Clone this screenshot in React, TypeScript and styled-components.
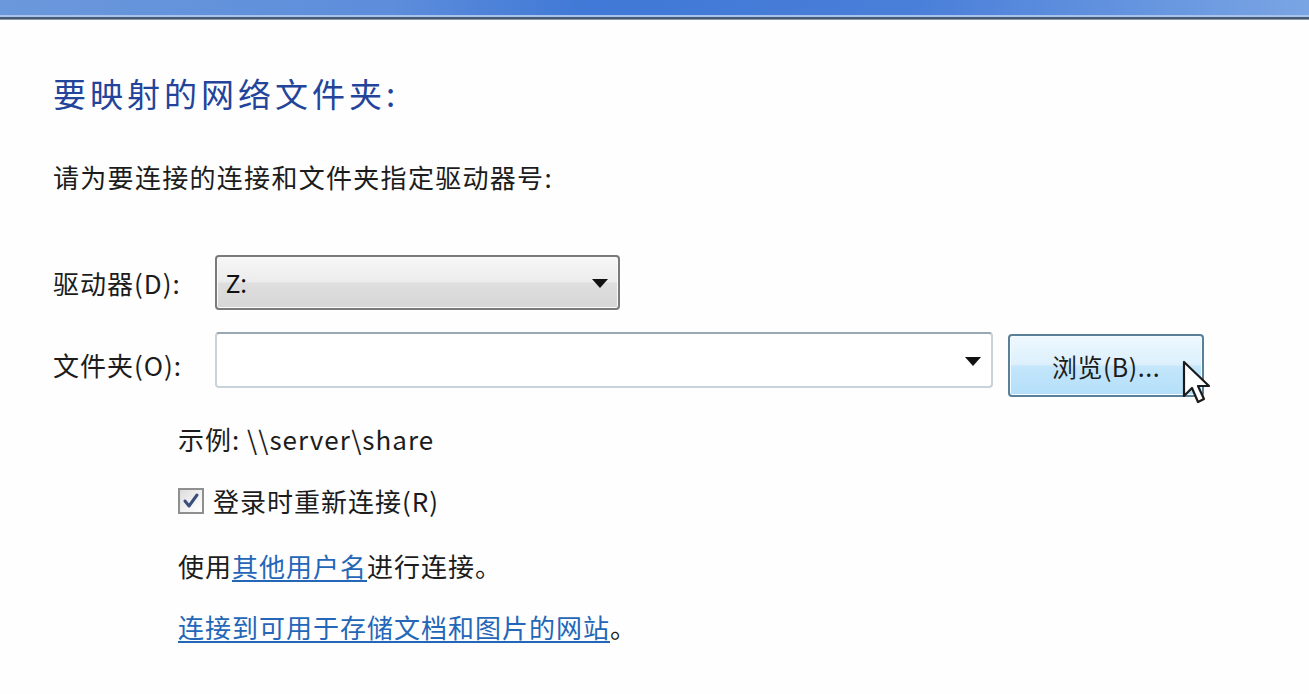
import styled, { createGlobalStyle } from "styled-components";

const GlobalStyle = createGlobalStyle`
  html, body {
    margin: 0;
    padding: 0;
    background: #ffffff;
  }
  body {
    font-family: "Noto Sans CJK SC", "Noto Sans", sans-serif;
    color: #1c1c1c;
    overflow: hidden;
  }
`;

const Page = styled.div`
  width: 1309px;
  height: 694px;
  background: #fdfefd;
  position: relative;
  overflow: hidden;
`;

const TitleStrip = styled.div`
  height: 15px;
  background: linear-gradient(
    90deg,
    #6b98dc 0%,
    #5d8ddb 30%,
    #3f78d6 45%,
    #4a7fd9 70%,
    #7aa5e4 100%
  );
  border-bottom: 2px solid #a9c4ec;
  box-shadow: 0 2px 0 #4a5a70, 0 3px 0 #8a98aa;
`;

const Content = styled.div`
  padding: 56px 0 0 53px;
`;

const Heading = styled.h1`
  margin: 0;
  font-size: 33px;
  font-weight: 400;
  line-height: 40px;
  letter-spacing: 4px;
  color: #23449a;
`;

const Instruction = styled.p`
  margin: 48px 0 0;
  font-size: 26px;
  line-height: 32px;
  letter-spacing: 1.3px;
`;

const Form = styled.div`
  margin-top: 62px;
  display: grid;
  grid-template-columns: 162px auto;
  row-gap: 22px;
  align-items: start;
`;

const Label = styled.label<{ $h: number }>`
  font-size: 26px;
  line-height: ${(p) => p.$h}px;
  letter-spacing: 1px;
`;

const FieldRow = styled.div`
  display: flex;
  align-items: flex-start;
  gap: 15px;
`;

const Combo = styled.div<{ $w: number; $editable?: boolean }>`
  box-sizing: border-box;
  width: ${(p) => p.$w}px;
  height: ${(p) => (p.$editable ? 56 : 55)}px;
  display: flex;
  align-items: center;
  justify-content: space-between;
  padding: 0 10px 0 9px;
  border-radius: 4px;
  font-size: 26px;
  ${(p) =>
    p.$editable
      ? `
    background: #ffffff;
    border: 2px solid #c7d4dc;
    border-top-color: #9aa8b4;
  `
      : `
    background: linear-gradient(180deg, #f7f7f7 0%, #ececec 48%, #dedede 52%, #d6d6d6 100%);
    border: 2px solid #7a7a7a;
    box-shadow: inset 0 0 0 1px #fafafa;
  `}
`;

const ComboValue = styled.span`
  font-family: "Noto Sans", sans-serif;
  font-size: 25px;
  color: #111;
`;

const Arrow = styled.span`
  width: 0;
  height: 0;
  border-left: 8px solid transparent;
  border-right: 8px solid transparent;
  border-top: 9px solid #111;
  margin-top: 2px;
`;

const ButtonWrap = styled.div`
  position: relative;
  margin-top: 2px;
`;

const Button = styled.button`
  box-sizing: border-box;
  width: 196px;
  height: 63px;
  border: 2px solid #5a7f98;
  border-radius: 4px;
  background: linear-gradient(180deg, #eef8fe 0%, #dcf0fc 48%, #c3e6fb 52%, #b4dff9 100%);
  box-shadow: inset 0 0 0 1px #f4fbff;
  font-family: "Noto Sans CJK SC", "Noto Sans", sans-serif;
  font-size: 25px;
  letter-spacing: 0.5px;
  color: #1c1c1c;
  padding: 0;
  margin: 0;
`;

const Cursor = styled.svg`
  position: absolute;
  left: 174px;
  top: 26px;
`;

const Extra = styled.div`
  padding-left: 125px;
  margin-top: 25px;
  display: flex;
  flex-direction: column;
`;

const Line = styled.div<{ $gap: number }>`
  margin-top: ${(p) => p.$gap}px;
  font-size: 26px;
  line-height: 32px;
  letter-spacing: 1px;
  display: flex;
  align-items: center;
`;

const CheckBox = styled.span`
  box-sizing: border-box;
  width: 26px;
  height: 26px;
  border: 2px solid #8e8f8f;
  background: linear-gradient(135deg, #dcdcdc 0%, #f4f4f4 60%, #ffffff 100%);
  display: inline-flex;
  align-items: center;
  justify-content: center;
  margin-right: 9px;
`;

const Link = styled.a`
  color: #2466b8;
  text-decoration: underline;
  text-underline-offset: 3px;
  cursor: pointer;
`;

export default function App() {
  return (
    <Page>
      <GlobalStyle />
      <TitleStrip />
      <Content>
        <Heading>要映射的网络文件夹:</Heading>
        <Instruction>请为要连接的连接和文件夹指定驱动器号:</Instruction>
        <Form>
          <Label $h={55}>驱动器(D):</Label>
          <FieldRow>
            <Combo $w={405}>
              <ComboValue>Z:</ComboValue>
              <Arrow />
            </Combo>
          </FieldRow>
          <Label $h={66}>文件夹(O):</Label>
          <FieldRow>
            <Combo $w={778} $editable>
              <span />
              <Arrow />
            </Combo>
            <ButtonWrap>
              <Button>浏览(B)...</Button>
              <Cursor width="32" height="48" viewBox="0 0 32 48">
                <path
                  d="M2 2 L2 36 L10 28 L16 42 L22 39 L16 26 L27 26 Z"
                  fill="#ffffff"
                  stroke="#1a1a1a"
                  strokeWidth="2.2"
                  strokeLinejoin="round"
                />
              </Cursor>
            </ButtonWrap>
          </FieldRow>
        </Form>
        <Extra>
          <Line $gap={0}>示例: \\server\share</Line>
          <Line $gap={30}>
            <CheckBox>
              <svg width="18" height="18" viewBox="0 0 18 18">
                <path
                  d="M3 9 L7 14 L15 3"
                  fill="none"
                  stroke="#3a4f7a"
                  strokeWidth="3"
                  strokeLinecap="round"
                  strokeLinejoin="round"
                />
              </svg>
            </CheckBox>
            登录时重新连接(R)
          </Line>
          <Line $gap={33}>
            <span>
              使用<Link>其他用户名</Link>进行连接。
            </span>
          </Line>
          <Line $gap={29}>
            <span>
              <Link>连接到可用于存储文档和图片的网站</Link>。
            </span>
          </Line>
        </Extra>
      </Content>
    </Page>
  );
}
